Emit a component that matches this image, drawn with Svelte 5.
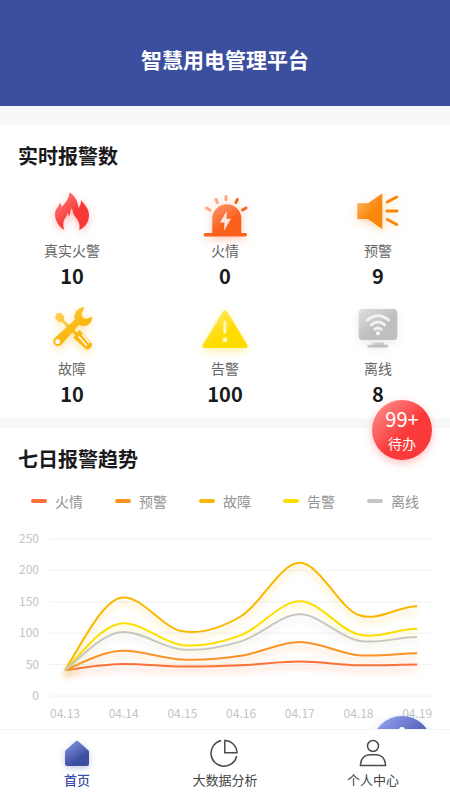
<script lang="ts">
	const alarms = [
		{ icon: 'fire', label: '真实火警', count: 10 },
		{ icon: 'siren', label: '火情', count: 0 },
		{ icon: 'speaker', label: '预警', count: 9 },
		{ icon: 'tools', label: '故障', count: 10 },
		{ icon: 'warning', label: '告警', count: 100 },
		{ icon: 'offline', label: '离线', count: 8 }
	]

	const days = ['04.13', '04.14', '04.15', '04.16', '04.17', '04.18', '04.19']
	const ticks = [250, 200, 150, 100, 50, 0]

	const series = [
		{ name: '火情', key: 'red', values: [41, 51, 47, 49, 55, 49, 50] },
		{ name: '预警', key: 'orange', values: [41, 72, 58, 64, 86, 65, 68] },
		{ name: '故障', key: 'amber', values: [41, 157, 103, 127, 212, 129, 143] },
		{ name: '告警', key: 'yellow', values: [41, 116, 81, 97, 151, 98, 107] },
		{ name: '离线', key: 'gray', values: [41, 102, 74, 87, 130, 88, 94] }
	]

	const tabs = [
		{ icon: 'home', label: '首页' },
		{ icon: 'pie', label: '大数据分析' },
		{ icon: 'user', label: '个人中心' }
	]

	let active = $state(0)

	const stepX = 58.7
	const px = (i: number) => 47 + i * stepX
	const py = (v: number) => 166 - v * 0.628

	// smooth line: flat on the peaks, follows the neighbours elsewhere
	function linePath(values: number[]) {
		const ys = values.map(py)
		const last = ys.length - 1
		const slopes = ys.map((y, i) => {
			if (i == 0) return (ys[1] - y) * 1.3
			if (i == last) return 0
			if (y < ys[i - 1] && y < ys[i + 1]) return 0
			return (ys[i + 1] - ys[i - 1]) / 2
		})
		let d = `M${px(0)} ${ys[0]}`
		for (let i = 0; i < last; i++) {
			d += ` C${px(i) + stepX / 3} ${ys[i] + slopes[i] / 3}`
			d += ` ${px(i + 1) - stepX / 3} ${ys[i + 1] - slopes[i + 1] / 3}`
			d += ` ${px(i + 1)} ${ys[i + 1]}`
		}
		return d
	}
</script>

<div class="app">
	<header class="header">
		<h1>智慧用电管理平台</h1>
	</header>

	<main class="content">
		<section class="panel">
			<h2>实时报警数</h2>
			<div class="alarm-grid">
				{#each alarms as alarm}
					<div class="alarm">
						<svg class="alarm-icon {alarm.icon}" viewBox="0 0 48 48" aria-hidden="true">
							<defs>
								<linearGradient id="g-{alarm.icon}" x1="0" y1="0" x2="0.7" y2="0.8">
									<stop class="from" offset="0" />
									<stop class="to" offset="0.75" />
								</linearGradient>
							</defs>
							<g fill="url(#g-{alarm.icon})">
								{#if alarm.icon == 'fire'}
									<path d="M16.300 42C11 39 7 33 7 26C7 21 11 19 12 14.500C13 16 13.500 17.500 13.500 19.500C17 15 21.500 11 21.300 4.300C26 7 30 13 30.500 20C32 18 33 15.500 33 12C36 16 41 20 41 27C41 34 37 39.500 31.300 42C32.500 36 30 32 27 28.500C25 26 24.500 23 24 20.300C22 22.500 22.500 26 21 28.700C20.500 27 20.300 26 19.300 25C19 29 16 30.500 15.500 34C15 37 15.500 40 16.300 42Z" />
								{:else if alarm.icon == 'siren'}
									<path d="M11.300 45V30.500a14.500 14.200 0 0 1 29 0V45h4a1.700 1.700 0 0 1 0 3.400h-40a1.700 1.700 0 0 1 0-3.400z" />
									<path class="bolt" d="M25.700 23L19 34.500h4.500l-.5 8.200l7-12h-4.500z" />
									<g class="rays">
										<path class="soft" d="M5.500 20l3.500 2M15 11.500l1.300 3" />
										<path class="soft" d="M25 8.500v3" />
										<path d="M36.300 11.500l-1.300 3M45 20l-3.500 2" />
									</g>
								{:else if alarm.icon == 'speaker'}
									<path d="M3.300 15.300H14L28.300 5.300V41.300L14 31H3.300Z" />
									<path class="waves" d="M33.300 14l9.400-5M33 23h10M33.300 31.500l9.400 5" />
								{:else if alarm.icon == 'tools'}
									<path d="M7 12.300L8.300 7.600L13 6.700L16.300 10.700L16 14.500L29 26.600L31.700 24L43.800 37.500Q44.600 39 43.300 41Q41.500 43.500 38.600 43.800L25.300 31.700L27 28.900L13.700 15.700L11.500 16.500Z" />
									<path class="groove" d="M30.800 30.500l8 9.200M34.300 28.500l7.200 8.400" />
									<path d="M36.500 1.200Q31 1.200 28 5.500Q25.500 9.500 27 13.500L6.300 32.300Q4 35.500 6.500 38.500Q9.500 41.500 13 39L31 18.800Q36 21.500 40.500 18.500Q44.500 15.500 44 10.800L38.800 12.700Q35.500 13 34.300 10.700Q33 7.500 34.500 5.500Z" />
									<circle class="hole" cx="9.700" cy="35.700" r="2.400" />
								{:else if alarm.icon == 'warning'}
									<path d="M21.800 5.800Q24 3 26.200 5.800L46.300 39Q47.300 42 44.500 42H3.500Q.7 42 1.700 39Z" />
									<path class="mark" d="M23.900 16v10.500" />
									<circle class="dot" cx="23.900" cy="33.700" r="2.500" />
								{:else}
									<rect x="4.700" y="3" width="38.600" height="31" rx="4" />
									<path d="M18.500 36.500h11v2.300H33a1.300 1.300 0 0 1 0 2.600H14.500a1.300 1.300 0 0 1 0-2.600h4z" />
									<path class="wifi" d="M13.500 14q10.500-8.500 21 0M17.300 18.800q6.700-5.500 13.400 0M21 23.200q3-2.400 6 0" />
									<circle class="dot" cx="24" cy="27.300" r="2" />
								{/if}
							</g>
						</svg>
						<span class="alarm-label">{alarm.label}</span>
						<strong>{alarm.count}</strong>
					</div>
				{/each}
			</div>
		</section>

		<section class="panel trend">
			<h2>七日报警趋势</h2>
			<ul class="legend">
				{#each series as s}
					<li><i class="dash {s.key}"></i>{s.name}</li>
				{/each}
			</ul>
			<svg class="chart" viewBox="0 0 414 198" role="img" aria-label="七日报警趋势">
				{#each ticks as tick}
					<line class="grid-line" x1="31" x2="414" y1={py(tick)} y2={py(tick)} />
					<text class="axis" x="21" y={py(tick) + 4} text-anchor="end">{tick}</text>
				{/each}
				{#each days as day, i}
					<text class="axis" x={px(i)} y="188" text-anchor="middle">{day}</text>
				{/each}
				{#each series as s}
					<path class="line {s.key}" d={linePath(s.values)} />
				{/each}
			</svg>
		</section>
	</main>

	<button class="float todo">
		<span class="todo-count">99+</span>
		<span>待办</span>
	</button>
	<button class="float assist" aria-label="客服">
		<svg viewBox="0 0 28 28" aria-hidden="true">
			<circle cx="14" cy="3" r="3" />
			<path d="M14 4v5M5 12a9 9 0 0 1 18 0v8H5z" />
		</svg>
	</button>

	<nav class="tabbar">
		{#each tabs as tab, i}
			<button class="tab" class:active={active == i} onclick={() => (active = i)}>
				<svg class="tab-icon {tab.icon}" viewBox="0 0 28 28" aria-hidden="true">
					{#if tab.icon == 'home'}
						<defs>
							<linearGradient id="g-home" x1="0" y1="0" x2="0.6" y2="1">
								<stop offset="0" stop-color="#8b9bea" />
								<stop offset="0.8" stop-color="#3d4fa0" />
							</linearGradient>
						</defs>
						<path fill="url(#g-home)" d="M12.800 2.200Q14 1.200 15.200 2.200L25.500 11.600Q26 12.200 26 13V24.800Q26 27 23.800 27H4.200Q2 27 2 24.800V13Q2 12.200 2.500 11.600Z" />
					{:else if tab.icon == 'pie'}
						<path d="M10 1.600A13 13 0 1 0 25.700 17" />
						<path d="M13.800 1.600V13.800H26A12.400 12.400 0 0 0 13.800 1.600Z" />
					{:else}
						<circle cx="14" cy="7" r="5.500" />
						<path d="M1.500 26.500C1.500 19 6 15.700 11 15.700H17C22 15.700 26.500 19 26.500 26.500Z" />
					{/if}
				</svg>
				<span>{tab.label}</span>
			</button>
		{/each}
	</nav>
</div>

<style>
	:global(body) {
		margin: 0;
	}

	.app {
		position: relative;
		display: flex;
		flex-direction: column;
		height: 100vh;
		overflow: hidden;
		background: #f8f8f8;
		color: #1a1a1a;
		font-family: "Noto Sans CJK SC", "Noto Sans", sans-serif;
	}

	.header {
		padding: 43px 0 31px;
		background: #3c4f9f;
		color: #fff;
		text-align: center;
	}
	h1 {
		margin: 0;
		font-size: 21px;
		line-height: 32px;
		font-weight: 700;
	}

	.content {
		display: flex;
		flex: 1;
		flex-direction: column;
		gap: 10px;
		min-height: 0;
		padding-top: 19px;
		overflow: hidden;
	}
	.panel {
		padding: 19px 18px 12px;
		background: #fff;
	}
	.trend {
		flex: 1;
		padding-bottom: 0;
	}
	h2 {
		margin: 0;
		font-size: 20px;
		line-height: 24px;
		font-weight: 700;
	}

	.alarm-grid {
		display: grid;
		grid-template-columns: repeat(3, 1fr);
		gap: 18px 45px;
		margin-top: 20px;
	}
	.alarm {
		display: flex;
		flex-direction: column;
		align-items: center;
	}
	.alarm-label {
		margin-top: 4px;
		color: #666;
		font-size: 14px;
		line-height: 20px;
	}
	.alarm strong {
		margin-top: 4px;
		font-size: 20px;
		line-height: 24px;
		font-weight: 700;
	}

	.alarm-icon {
		width: 48px;
		height: 48px;
		overflow: visible;
		filter: drop-shadow(0 3px 4px var(--glow));
	}
	.from {
		stop-color: var(--light);
	}
	.to {
		stop-color: var(--main);
	}
	.fire {
		--light: #ff8a8a;
		--main: #f93838;
		--glow: #f9383850;
	}
	.siren {
		--light: #ffa685;
		--main: #f9611d;
		--glow: #f9611d50;
	}
	.speaker {
		--light: #ffb976;
		--main: #f98709;
		--glow: #f9870950;
	}
	.tools {
		--light: #ffd45e;
		--main: #fab70d;
		--glow: #fab70d60;
	}
	.warning {
		--light: #ffec85;
		--main: #ffdc00;
		--glow: #ffdc0060;
	}
	.offline {
		--light: #dedede;
		--main: #bfbfbf;
		--glow: #bfbfbf50;
	}
	.bolt,
	.hole {
		fill: #fff;
	}
	.bolt {
		opacity: 0.85;
	}
	.rays,
	.waves {
		fill: none;
		stroke: var(--main);
		stroke-width: 3;
		stroke-linecap: round;
	}
	.rays .soft {
		stroke: var(--light);
	}
	.groove {
		fill: none;
		stroke: #fff;
		stroke-width: 1.5;
	}
	.mark,
	.wifi {
		fill: none;
		stroke: #fffbe8;
		stroke-width: 3;
		stroke-linecap: round;
	}
	.mark,
	.warning .dot {
		opacity: 0.8;
	}
	.wifi {
		stroke: #f2f2f2;
	}
	.dot {
		fill: #fffbe8;
	}

	.legend {
		display: flex;
		justify-content: space-between;
		margin: 20px 0 19px;
		padding: 0 13px;
		list-style: none;
		color: #949494;
		font-size: 14px;
		line-height: 20px;
	}
	.legend li {
		display: flex;
		align-items: center;
		gap: 8px;
	}
	.dash {
		width: 16px;
		height: 4px;
		border-radius: 2px;
		background: var(--tone);
	}
	.red {
		--tone: #fc7038;
	}
	.orange {
		--tone: #fc9226;
	}
	.amber {
		--tone: #fab700;
	}
	.yellow {
		--tone: #fddd00;
	}
	.gray {
		--tone: #c6c6c6;
	}

	.chart {
		display: block;
		width: 100%;
		overflow: visible;
	}
	.grid-line {
		stroke: #f2f2f2;
	}
	.axis {
		fill: #c2c4c8;
		font-size: 12px;
	}
	.line {
		fill: none;
		stroke: var(--tone);
		stroke-width: 2;
		filter: drop-shadow(0 5px 3px color-mix(in srgb, var(--tone) 40%, transparent));
	}

	button {
		padding: 0;
		border: none;
		font-family: inherit;
		cursor: pointer;
	}
	.float {
		position: absolute;
		right: 18px;
		display: flex;
		flex-direction: column;
		align-items: center;
		width: 60px;
		height: 60px;
		border-radius: 50%;
		color: #fff;
		font-size: 14px;
		line-height: 20px;
	}
	.todo {
		bottom: 340px;
		padding-top: 5px;
		background: linear-gradient(135deg, #ff9797, #fa3a3a 55%);
		box-shadow: 0 3px 8px #fa3a3a50;
	}
	.todo-count {
		font-size: 20px;
		line-height: 28px;
	}
	.assist {
		bottom: 24px;
		padding-top: 11px;
		background: linear-gradient(135deg, #9eacfb, #3d4fa0 70%);
		box-shadow: 0 3px 8px #3d4fa050;
	}
	.assist svg {
		width: 28px;
		fill: #fff;
	}

	.tabbar {
		position: relative;
		display: flex;
		padding: 9px 3px 10px;
		border-top: 1px solid #f5f5f5;
		background: #fff;
	}
	.tab {
		display: flex;
		flex: 1;
		flex-direction: column;
		align-items: center;
		gap: 3px;
		background: none;
		color: #444;
		font-size: 13px;
		line-height: 20px;
	}
	.tab.active {
		color: #3c4fa6;
		font-weight: 500;
	}
	.tab-icon {
		width: 28px;
		height: 28px;
		overflow: visible;
		fill: none;
		stroke: #4a4a4a;
		stroke-width: 1.5;
	}
	.tab-icon.home {
		stroke: none;
		filter: drop-shadow(0 2px 3px #3d4fa050);
	}
</style>
